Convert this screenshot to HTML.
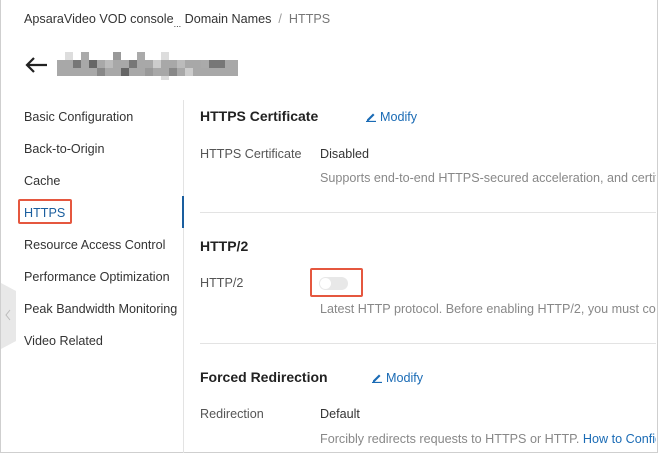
<!DOCTYPE html>
<html><head><meta charset="utf-8"><style>
*{margin:0;padding:0;box-sizing:border-box}
body{width:659px;height:454px;background:#fff;font-family:"Liberation Sans",Arial,sans-serif;position:relative;overflow:hidden;color:#333}
.frame{position:absolute;left:0;top:0;width:658px;height:453px;border:1px solid #cfcfcf;border-top:none}
.a{position:absolute;white-space:nowrap}
.nav{font-size:12.6px;color:#333}
.h{font-size:14px;font-weight:bold;color:#222}
.lbl{font-size:12.6px;color:#555}
.val{font-size:12.6px;color:#333}
.desc{font-size:12.6px;color:#888}
.link{color:#1a6bb5;font-size:12.6px}
.clip{position:absolute;left:185px;top:95px;width:471px;height:357px;overflow:hidden}
.px{position:absolute;width:8px;height:8px}
</style></head><body>
<div class="frame"></div>
<div class="a" style="left:24px;top:12px;font-size:12.6px;color:#333">ApsaraVideo VOD console<span style="font-size:9px;vertical-align:-4px">...</span> Domain Names &nbsp;<span style="color:#999">/</span>&nbsp; <span style="color:#777">HTTPS</span></div>
<svg class="a" style="left:24px;top:56px" width="24" height="18" viewBox="0 0 24 18"><path d="M23 9H3M10 2L3 9l7 7" fill="none" stroke="#222" stroke-width="2.2"/></svg>
<div class="a" style="left:57px;top:52px;width:181px;height:28px">
<div style="position:absolute;left:0;top:8px;width:181px;height:16px;background:#a8a8a8"></div>
<div class="px" style="left:8px;top:0;background:#ddd"></div><div class="px" style="left:16px;top:8px;background:#777"></div><div class="px" style="left:24px;top:0;background:#aaa"></div><div class="px" style="left:40px;top:16px;background:#888"></div><div class="px" style="left:48px;top:8px;background:#bbb"></div><div class="px" style="left:56px;top:0;background:#999"></div><div class="px" style="left:64px;top:16px;background:#666"></div><div class="px" style="left:72px;top:8px;background:#777"></div><div class="px" style="left:80px;top:0;background:#aaa"></div><div class="px" style="left:88px;top:16px;background:#999"></div><div class="px" style="left:96px;top:8px;background:#ccc"></div><div class="px" style="left:104px;top:0;background:#ddd"></div><div class="px" style="left:112px;top:16px;background:#888"></div><div class="px" style="left:120px;top:8px;background:#bbb"></div><div class="px" style="left:128px;top:16px;background:#ccc"></div><div class="px" style="left:144px;top:8px;background:#aaa"></div><div class="px" style="left:152px;top:8px;width:16px;background:#777"></div><div class="px" style="left:32px;top:8px;background:#666"></div><div class="px" style="left:104px;top:24px;height:4px;background:#ddd"></div>
</div>
<div class="a" style="left:183px;top:100px;width:1px;height:353px;background:#e3e3e3"></div>
<div class="a" style="left:182px;top:196px;width:2px;height:32px;background:#1a5e9e"></div>
<div class="a nav" style="left:24px;top:110px">Basic Configuration</div>
<div class="a nav" style="left:24px;top:142px">Back-to-Origin</div>
<div class="a nav" style="left:24px;top:174px">Cache</div>
<div class="a" style="left:18px;top:199px;width:54px;height:25px;border:2px solid #e5573f;border-radius:2px"></div>
<div class="a nav" style="left:24px;top:206px;color:#1a5e9e">HTTPS</div>
<div class="a nav" style="left:24px;top:238px">Resource Access Control</div>
<div class="a nav" style="left:24px;top:270px">Performance Optimization</div>
<div class="a nav" style="left:24px;top:302px">Peak Bandwidth Monitoring</div>
<div class="a nav" style="left:24px;top:334px">Video Related</div>
<svg class="a" style="left:1px;top:283px" width="16" height="66"><path d="M0 0L15 8V58L0 66Z" fill="#e8e8e8"/><path d="M9 27l-4 5 4 5" fill="none" stroke="#bbb" stroke-width="1"/></svg>
<div class="clip">
<div class="a h" style="left:15px;top:13px">HTTPS Certificate</div>
<svg class="a" style="left:180px;top:16px" width="12" height="11"><path d="M1 10.5h10" stroke="#1a6bb5" stroke-width="1.3"/><path d="M2 8.5l6-6 1.5 1.5-6 6H2z" fill="#1a6bb5"/></svg>
<div class="a link" style="left:195px;top:15px">Modify</div>
<div class="a lbl" style="left:15px;top:52px">HTTPS Certificate</div>
<div class="a val" style="left:135px;top:52px">Disabled</div>
<div class="a desc" style="left:135px;top:76px">Supports end-to-end HTTPS-secured acceleration, and certificates</div>
<div class="a" style="left:15px;top:117px;width:460px;height:1px;background:#e3e3e3"></div>
<div class="a h" style="left:15px;top:143px">HTTP/2</div>
<div class="a lbl" style="left:15px;top:181px">HTTP/2</div>
<div class="a" style="left:125px;top:173px;width:53px;height:29px;border:2px solid #e5573f;border-radius:2px"></div>
<div class="a" style="left:134px;top:182px;width:29px;height:13px;border-radius:7px;background:#e8e8e8"><div style="position:absolute;left:1px;top:1px;width:11px;height:11px;border-radius:50%;background:#fff"></div></div>
<div class="a desc" style="left:135px;top:207px">Latest HTTP protocol. Before enabling HTTP/2, you must configure</div>
<div class="a" style="left:15px;top:248px;width:460px;height:1px;background:#e3e3e3"></div>
<div class="a h" style="left:15px;top:274px">Forced Redirection</div>
<svg class="a" style="left:186px;top:277px" width="12" height="11"><path d="M1 10.5h10" stroke="#1a6bb5" stroke-width="1.3"/><path d="M2 8.5l6-6 1.5 1.5-6 6H2z" fill="#1a6bb5"/></svg>
<div class="a link" style="left:201px;top:276px">Modify</div>
<div class="a lbl" style="left:15px;top:312px">Redirection</div>
<div class="a val" style="left:135px;top:312px">Default</div>
<div class="a desc" style="left:135px;top:337px">Forcibly redirects requests to HTTPS or HTTP. <span style="color:#1a6bb5">How to Configure</span></div>
</div>
</body></html>
